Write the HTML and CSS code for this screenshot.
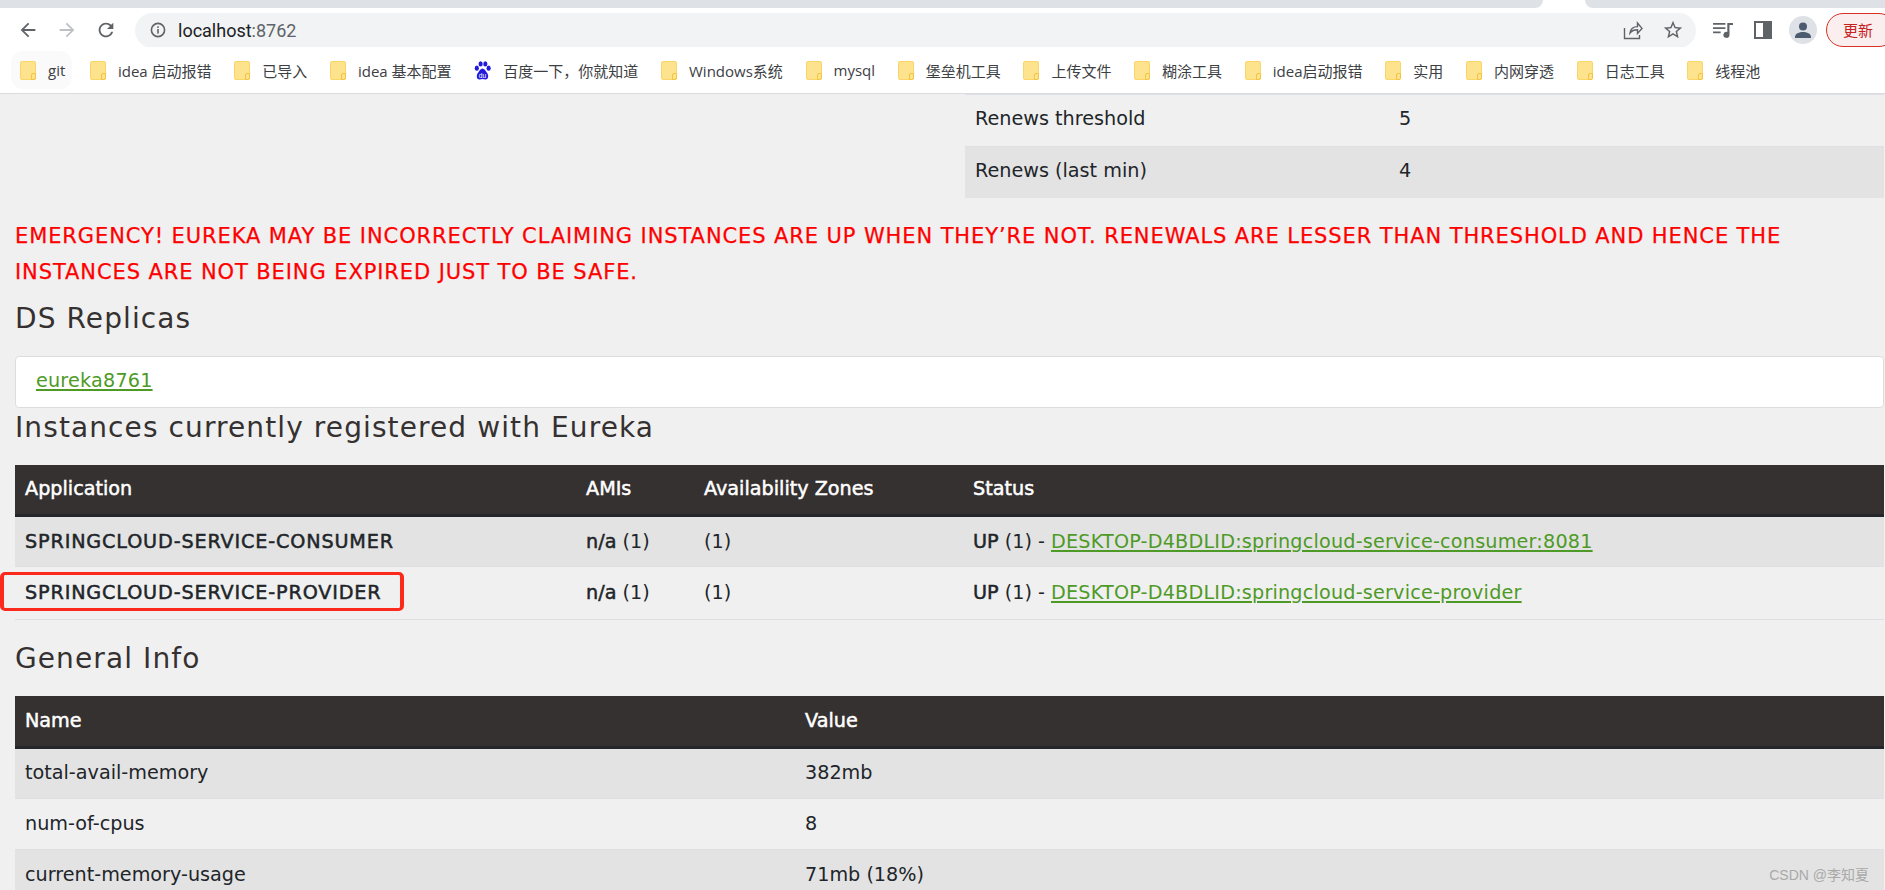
FILE: index.html
```html
<!DOCTYPE html>
<html lang="en">
<head>
  <meta charset="UTF-8">
  <title>Eureka</title>
  <link rel="stylesheet" href="styles.css">
</head>
<body>
  <div id="tabstrip">
    <div class="tab-left"></div>
    <div class="tab-active"></div>
    <div class="tab-right"></div>
  </div>

  <div id="toolbar">
    <svg class="nav-icon" viewBox="0 0 24 24"><path fill="#5f6368" d="M20 11H7.83l5.59-5.59L12 4l-8 8 8 8 1.41-1.41L7.83 13H20v-2z"/></svg>
    <svg class="nav-icon" viewBox="0 0 24 24"><path fill="#bdc1c6" d="M4 11h12.17l-5.59-5.59L12 4l8 8-8 8-1.41-1.41L16.17 13H4v-2z"/></svg>
    <svg class="nav-icon" viewBox="0 0 24 24"><path fill="#5f6368" d="M17.65 6.35C16.2 4.9 14.21 4 12 4c-4.42 0-7.99 3.58-7.99 8s3.57 8 7.99 8c3.73 0 6.84-2.55 7.73-6h-2.08c-.82 2.33-3.04 4-5.65 4-3.31 0-6-2.69-6-6s2.69-6 6-6c1.66 0 3.14.69 4.22 1.78L13 11h7V4l-2.35 2.35z"/></svg>
    <div id="omnibox">
      <svg class="info-icon" viewBox="0 0 16 16"><circle cx="8" cy="8" r="6.6" fill="none" stroke="#5f6368" stroke-width="1.6"/><rect x="7.2" y="7" width="1.6" height="4.6" fill="#5f6368"/><rect x="7.2" y="4.3" width="1.6" height="1.6" fill="#5f6368"/></svg>
      <span class="url">localhost<span class="url-port">:8762</span></span>
      <svg class="share-icon" viewBox="0 0 20 20"><path fill="none" stroke="#5f6368" stroke-width="1.4" d="M1.5 8v10.5h15V15M7 13c.6-4 3.6-6.4 7.5-6.4V3l4.5 5.4-4.5 5V9.800c-3 0-5.800 1-7.500 3.200z"/></svg>
      <svg class="star-icon" viewBox="0 0 24 24"><path fill="#5f6368" d="M22 9.240l-7.190-.62L12 2 9.190 8.630 2 9.240l5.460 4.730L5.820 21 12 17.270 18.180 21l-1.630-7.030L22 9.240zM12 15.400l-3.760 2.270 1-4.280-3.320-2.880 4.380-.38L12 6.100l1.710 4.040 4.380.38-3.320 2.880 1 4.280L12 15.400z"/></svg>
    </div>
    <svg class="queue-icon" viewBox="0 0 22 20"><path fill="#5f6368" d="M0 2h13v2H0zM0 6.500h13v2H0zM0 11h8v2H0zM15 2h6v2.200h-3.700V14.500a3.200 3.200 0 1 1-2.300-3z"/></svg>
    <svg class="side-icon" viewBox="0 0 18 18"><path fill="#5f6368" d="M0 0h18v18H0zM2 2v14h7V2z"/></svg>
    <svg class="avatar" viewBox="0 0 28 28"><circle cx="14" cy="14" r="14" fill="#dee1e6"/><circle cx="14" cy="10.500" r="4" fill="#4d5b70"/><path fill="#4d5b70" d="M6 21c0-3.600 4.400-5 8-5s8 1.400 8 5v1H6z"/></svg>
    <div id="update-btn">更新</div>
  </div>

  <div id="bookmarks">
    <div class="bm bm-hover"><i class="folder"></i>git</div>
    <div class="bm"><i class="folder"></i>idea 启动报错</div>
    <div class="bm"><i class="folder"></i>已导入</div>
    <div class="bm"><i class="folder"></i>idea 基本配置</div>
    <div class="bm">
      <svg class="baidu" viewBox="0 0 18 20"><g fill="#2319dc"><ellipse cx="3" cy="7.500" rx="2.200" ry="2.800"/><ellipse cx="7" cy="3" rx="2.200" ry="2.800"/><ellipse cx="12" cy="3" rx="2.200" ry="2.800"/><ellipse cx="15.500" cy="7.500" rx="2.200" ry="2.800"/><path d="M9 8c-2 0-3 2.500-4.500 4C2.500 14 2 19.500 6 19.500c1 0 2-.5 3-.5s2 .5 3 .5c4 0 3.500-5.500 1.500-7.500C12 10.500 11 8 9 8z"/></g><text x="9" y="17.500" class="baidu-du">du</text></svg>百度一下，你就知道
    </div>
    <div class="bm"><i class="folder"></i>Windows系统</div>
    <div class="bm"><i class="folder"></i>mysql</div>
    <div class="bm"><i class="folder"></i>堡垒机工具</div>
    <div class="bm"><i class="folder"></i>上传文件</div>
    <div class="bm"><i class="folder"></i>糊涂工具</div>
    <div class="bm"><i class="folder"></i>idea启动报错</div>
    <div class="bm"><i class="folder"></i>实用</div>
    <div class="bm"><i class="folder"></i>内网穿透</div>
    <div class="bm"><i class="folder"></i>日志工具</div>
    <div class="bm"><i class="folder"></i>线程池</div>
  </div>

  <div id="page">
    <div class="stats-row">
      <div></div>
      <table class="tbl stats-tbl">
        <colgroup><col class="stats-name"><col></colgroup>
        <tr class="even"><td>Renews threshold</td><td>5</td></tr>
        <tr class="odd"><td>Renews (last min)</td><td>4</td></tr>
      </table>
    </div>

    <p class="emergency">EMERGENCY! EUREKA MAY BE INCORRECTLY CLAIMING INSTANCES ARE UP WHEN THEY’RE NOT. RENEWALS ARE LESSER THAN THRESHOLD AND HENCE THE INSTANCES ARE NOT BEING EXPIRED JUST TO BE SAFE.</p>

    <h2 class="title first">DS Replicas</h2>
    <div class="replicas"><a href="#">eureka8761</a></div>

    <h2 class="title tight">Instances currently registered with Eureka</h2>
    <table class="tbl">
      <colgroup><col class="c-app"><col class="c-ami"><col class="c-zone"><col></colgroup>
      <thead>
        <tr><th>Application</th><th>AMIs</th><th>Availability Zones</th><th>Status</th></tr>
      </thead>
      <tbody>
        <tr class="odd">
          <td><b class="app-name">SPRINGCLOUD-SERVICE-CONSUMER</b></td>
          <td><b>n/a</b> (1)</td>
          <td>(1)</td>
          <td><b>UP</b> (1) - <a href="#">DESKTOP-D4BDLID:springcloud-service-consumer:8081</a></td>
        </tr>
        <tr class="even last">
          <td><b class="app-name">SPRINGCLOUD-SERVICE-PROVIDER</b></td>
          <td><b>n/a</b> (1)</td>
          <td>(1)</td>
          <td><b>UP</b> (1) - <a href="#">DESKTOP-D4BDLID:springcloud-service-provider</a></td>
        </tr>
      </tbody>
    </table>

    <h2 class="title">General Info</h2>
    <table class="tbl">
      <colgroup><col class="c-name"><col></colgroup>
      <thead>
        <tr><th>Name</th><th>Value</th></tr>
      </thead>
      <tbody>
        <tr class="odd"><td>total-avail-memory</td><td>382mb</td></tr>
        <tr class="even"><td>num-of-cpus</td><td>8</td></tr>
        <tr class="odd"><td>current-memory-usage</td><td>71mb (18%)</td></tr>
      </tbody>
    </table>
  </div>

  <div id="mark-box"></div>
  <div id="watermark">CSDN @李知夏</div>
</body>
</html>
```

FILE: styles.css
```css
html, body {
  margin: 0;
  height: 890px;
  overflow: hidden;
}
body {
  position: relative;
  background-color: #f0f0f0;
  font-family: "DejaVu Sans", "Noto Sans CJK SC", sans-serif;
  color: #212529;
}

/* browser chrome */
#tabstrip {
  display: flex;
  height: 8px;
  background-color: #fff;
}
.tab-left {
  width: 1543px;
  background-color: #dee1e6;
  border-bottom-right-radius: 8px;
}
.tab-active { width: 42px; }
.tab-right {
  flex: 1;
  background-color: #dee1e6;
  border-bottom-left-radius: 8px;
}

#toolbar {
  display: flex;
  align-items: center;
  height: 39px;
  padding-left: 17px;
  background-color: #fff;
  overflow: hidden;
}
.nav-icon {
  width: 22px;
  height: 22px;
  margin-right: 17px;
  margin-top: 5px;
  flex: none;
}
#omnibox {
  display: flex;
  align-items: center;
  width: 1561px;
  height: 35px;
  margin: 5px 0 0 1px;
  padding-left: 15px;
  box-sizing: border-box;
  background-color: #f1f3f4;
  border-radius: 18px;
  flex: none;
}
.info-icon {
  width: 16px;
  height: 16px;
  margin-right: 12px;
}
.url {
  flex: 1;
  font-family: Roboto, sans-serif;
  font-size: 18px;
  color: #202124;
}
.url-port { color: #5f6368; }
.share-icon {
  width: 20px;
  height: 20px;
  margin-right: 19px;
}
.star-icon {
  width: 22px;
  height: 22px;
  margin-right: 12px;
}
.queue-icon {
  width: 21px;
  height: 19px;
  margin: 5px 0 0 17px;
  flex: none;
}
.side-icon {
  width: 18px;
  height: 18px;
  margin: 5px 0 0 20px;
  flex: none;
}
.avatar {
  width: 28px;
  height: 28px;
  margin: 5px 0 0 17px;
  flex: none;
}
#update-btn {
  width: 70px;
  height: 34px;
  margin: 5px 0 0 9px;
  padding-left: 16px;
  box-sizing: border-box;
  line-height: 32px;
  font-family: "Noto Sans CJK SC", sans-serif;
  font-size: 15px;
  color: #c5221f;
  background-color: #fbeeee;
  border: 1px solid #d93025;
  border-radius: 18px;
  flex: none;
}

#bookmarks {
  display: flex;
  align-items: center;
  height: 46px;
  padding-left: 20px;
  gap: 22.7px;
  background-color: #fff;
  border-bottom: 1px solid #dadce0;
  font-family: "Open Sans", "Noto Sans CJK SC", sans-serif;
  font-size: 15px;
  color: #3c4043;
  white-space: nowrap;
}
.bm {
  display: flex;
  align-items: center;
}
.bm-hover {
  position: relative;
  isolation: isolate;
  margin-right: 2px;
}
.bm-hover::before {
  content: "";
  position: absolute;
  z-index: -1;
  left: -9px;
  right: -7px;
  top: -9px;
  bottom: -9px;
  background-color: #fafafb;
  border-radius: 12px;
}
.folder {
  position: relative;
  display: block;
  width: 14px;
  height: 17px;
  margin-right: 12px;
  background-color: #fde38d;
  border: 1px solid #fbd566;
  border-radius: 2px;
  flex: none;
}
.folder::after {
  content: "";
  position: absolute;
  right: -1px;
  bottom: -1px;
  width: 3px;
  height: 5px;
  border: 1px solid #f5c542;
  border-radius: 2px 0 2px 0;
}
.baidu {
  width: 17px;
  height: 19px;
  margin-right: 12px;
  flex: none;
}
.baidu-du {
  font-family: "Liberation Sans", sans-serif;
  font-size: 7px;
  fill: #fff;
  text-anchor: middle;
}

/* eureka page */
#page {
  padding: 0 1px 0 15px;
}
.stats-row {
  display: grid;
  grid-template-columns: 1fr 919px;
}
.tbl {
  width: 100%;
  border-collapse: collapse;
  table-layout: fixed;
  font-size: 19.2px;
}
.tbl th, .tbl td {
  height: 51px;
  padding: 0 10px 1px;
  text-align: left;
  box-sizing: border-box;
}
.stats-tbl td {
  height: 51.5px;
  padding-bottom: 3px;
}
.tbl th {
  height: 51px;
  background-color: #353130;
  color: #fff;
  font-weight: 400;
  -webkit-text-stroke: .5px #fff;
  border-bottom: 3px solid #24262b;
}
.tbl td { border-top: 1px solid #dde0e3; }
.tbl b {
  font-weight: 400;
  -webkit-text-stroke: .5px #212529;
}
.tbl .app-name { letter-spacing: .85px; }
.last td {
  height: 53px;
  border-bottom: 1px solid #dde0e3;
}
.odd td { background-color: #e3e3e3; }
.even td { background-color: #f0f0f0; }
.tbl a, .replicas a {
  color: #4e9a26;
  letter-spacing: .2px;
  text-decoration-thickness: 2px;
  text-underline-offset: 2px;
}

.stats-name { width: 424px; }
.c-app { width: 561px; }
.c-ami { width: 118px; }
.c-zone { width: 269px; }
.c-name { width: 780px; }

.emergency {
  margin: 20px 0 0;
  line-height: 36px;
  font-size: 21px;
  letter-spacing: .9px;
  -webkit-text-stroke: .25px #ff0000;
  color: #ff0000;
}
.title {
  margin: 21px 0 19px;
  line-height: 36px;
  font-size: 28px;
  font-weight: 400;
  letter-spacing: 1.1px;
  color: #353130;
}
.title.first { margin-top: 11px; }
.title.tight { margin-top: 2px; }
.replicas {
  height: 52px;
  line-height: 48px;
  padding-left: 20px;
  box-sizing: border-box;
  background-color: #fff;
  border: 1px solid #dddddd;
  border-radius: 4px;
  font-size: 19.2px;
}

#mark-box {
  position: absolute;
  left: 0;
  top: 572px;
  width: 404px;
  height: 39px;
  box-sizing: border-box;
  border: solid #fc2a1c;
  border-width: 3px 4px;
  border-radius: 5px;
}
#watermark {
  position: absolute;
  right: 16px;
  top: 864px;
  font-family: "Liberation Sans", "Noto Sans CJK SC", sans-serif;
  font-size: 14px;
  color: #a9a9a9;
}
```
